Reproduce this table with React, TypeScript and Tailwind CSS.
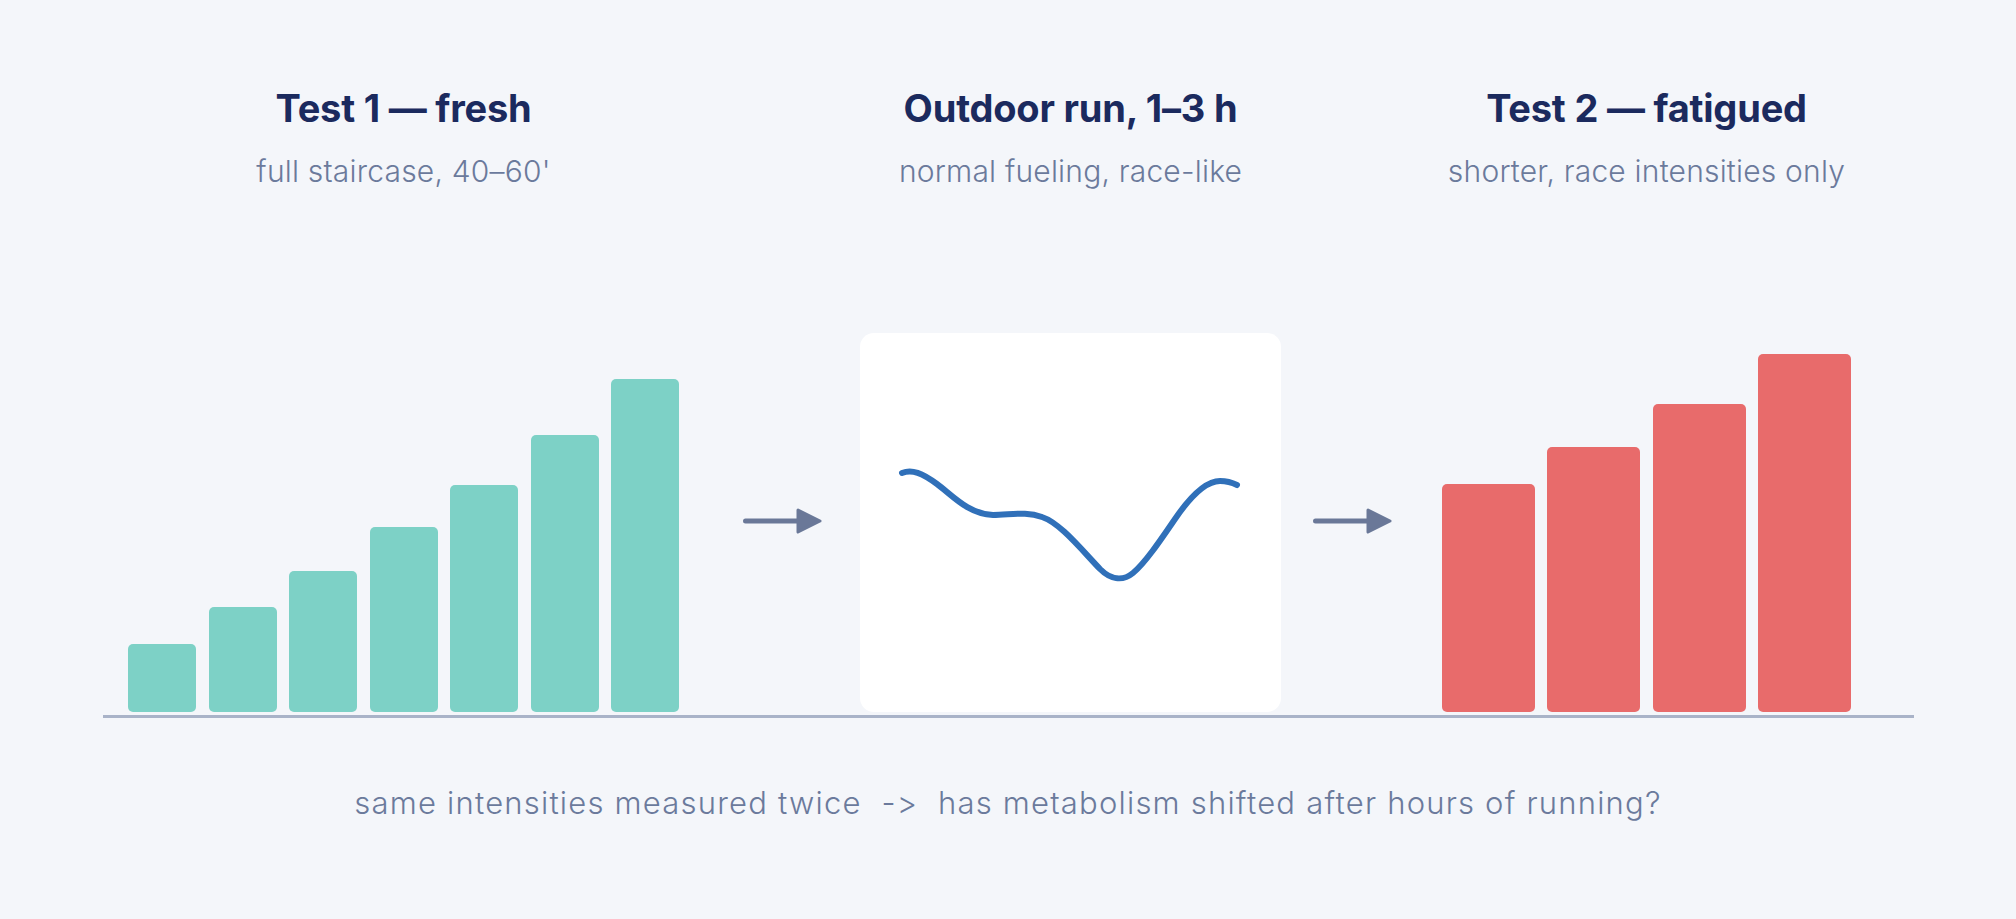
const tealBars = ["h-[68px]", "h-[105px]", "h-[141px]", "h-[185px]", "h-[227px]", "h-[277px]", "h-[333px]"];
const redBars = ["h-[228px]", "h-[265px]", "h-[308px]", "h-[358px]"];

function Arrow() {
  return (
    <svg width="80" height="26" viewBox="0 0 80 26" className="self-end mb-[178px] shrink-0">
      <line x1="2.5" y1="13" x2="56" y2="13" stroke="#6a7898" strokeWidth="5" strokeLinecap="round" />
      <path d="M55 2 L77 13 L55 24 Z" fill="#6a7898" stroke="#6a7898" strokeWidth="3" strokeLinejoin="round" />
    </svg>
  );
}

function Heading({ title, sub }: { title: string; sub: string }) {
  return (
    <>
      <h2 className="whitespace-nowrap text-[38px] leading-[46px] font-bold text-[#1b2a5e] tracking-[-0.2px]">{title}</h2>
      <p className="mt-[22px] whitespace-nowrap text-[30px] leading-[36px] font-light text-[#6b7a9c] tracking-[0.2px]">{sub}</p>
    </>
  );
}

export default function App() {
  return (
    <div className="w-[2016px] h-[919px] bg-[#f4f6fa] pt-[85px] font-['Inter',sans-serif] [font-feature-settings:'calt'_0,'liga'_0]">
      <div className="flex h-[627px] pl-[128px]">
        {/* Test 1 */}
        <div className="w-[551px] flex flex-col items-center">
          <Heading title="Test 1 — fresh" sub="full staircase, 40–60'" />
          <div className="mt-auto w-full flex items-end justify-between">
            {tealBars.map((h, i) => (
              <div key={i} className={`w-[68px] ${h} rounded-[5px] bg-[#7dd1c6]`} />
            ))}
          </div>
        </div>

        <div className="w-[64px] shrink-0" />
        <Arrow />
        <div className="w-[37px] shrink-0" />

        {/* Outdoor run */}
        <div className="w-[421px] flex flex-col items-center">
          <Heading title="Outdoor run, 1–3 h" sub="normal fueling, race-like" />
          <div className="mt-auto w-[421px] h-[379px] bg-white rounded-[14px]">
            <svg width="421" height="379" viewBox="0 0 421 379">
              <path
                d="M42 140 C52 136, 62 140, 77 151 C92 162, 108 181, 133 182 C150 182, 166 178, 182 184 C200 190, 220 215, 240 236 C250 246, 262 249, 273 240 C285 230, 300 208, 315 186 C330 164, 345 148, 360 148 C368 148, 373 150, 377 152"
                fill="none"
                stroke="#3070b9"
                strokeWidth="6"
                strokeLinecap="round"
              />
            </svg>
          </div>
        </div>

        <div className="w-[32px] shrink-0" />
        <Arrow />
        <div className="w-[49px] shrink-0" />

        {/* Test 2 */}
        <div className="w-[409px] flex flex-col items-center">
          <Heading title="Test 2 — fatigued" sub="shorter, race intensities only" />
          <div className="mt-auto w-full flex items-end justify-between">
            {redBars.map((h, i) => (
              <div key={i} className={`w-[93px] ${h} rounded-[5px] bg-[#e86b6b]`} />
            ))}
          </div>
        </div>
      </div>

      <div className="mt-[3px] ml-[103px] w-[1811px] h-[3px] bg-[#a9b3c8]" />

      <p className="mt-[66px] text-center whitespace-pre text-[31px] leading-[37px] tracking-[1.2px] font-light text-[#6b7a9c]">
        {"same intensities measured twice  ->  has metabolism shifted after hours of running?"}
      </p>
    </div>
  );
}
